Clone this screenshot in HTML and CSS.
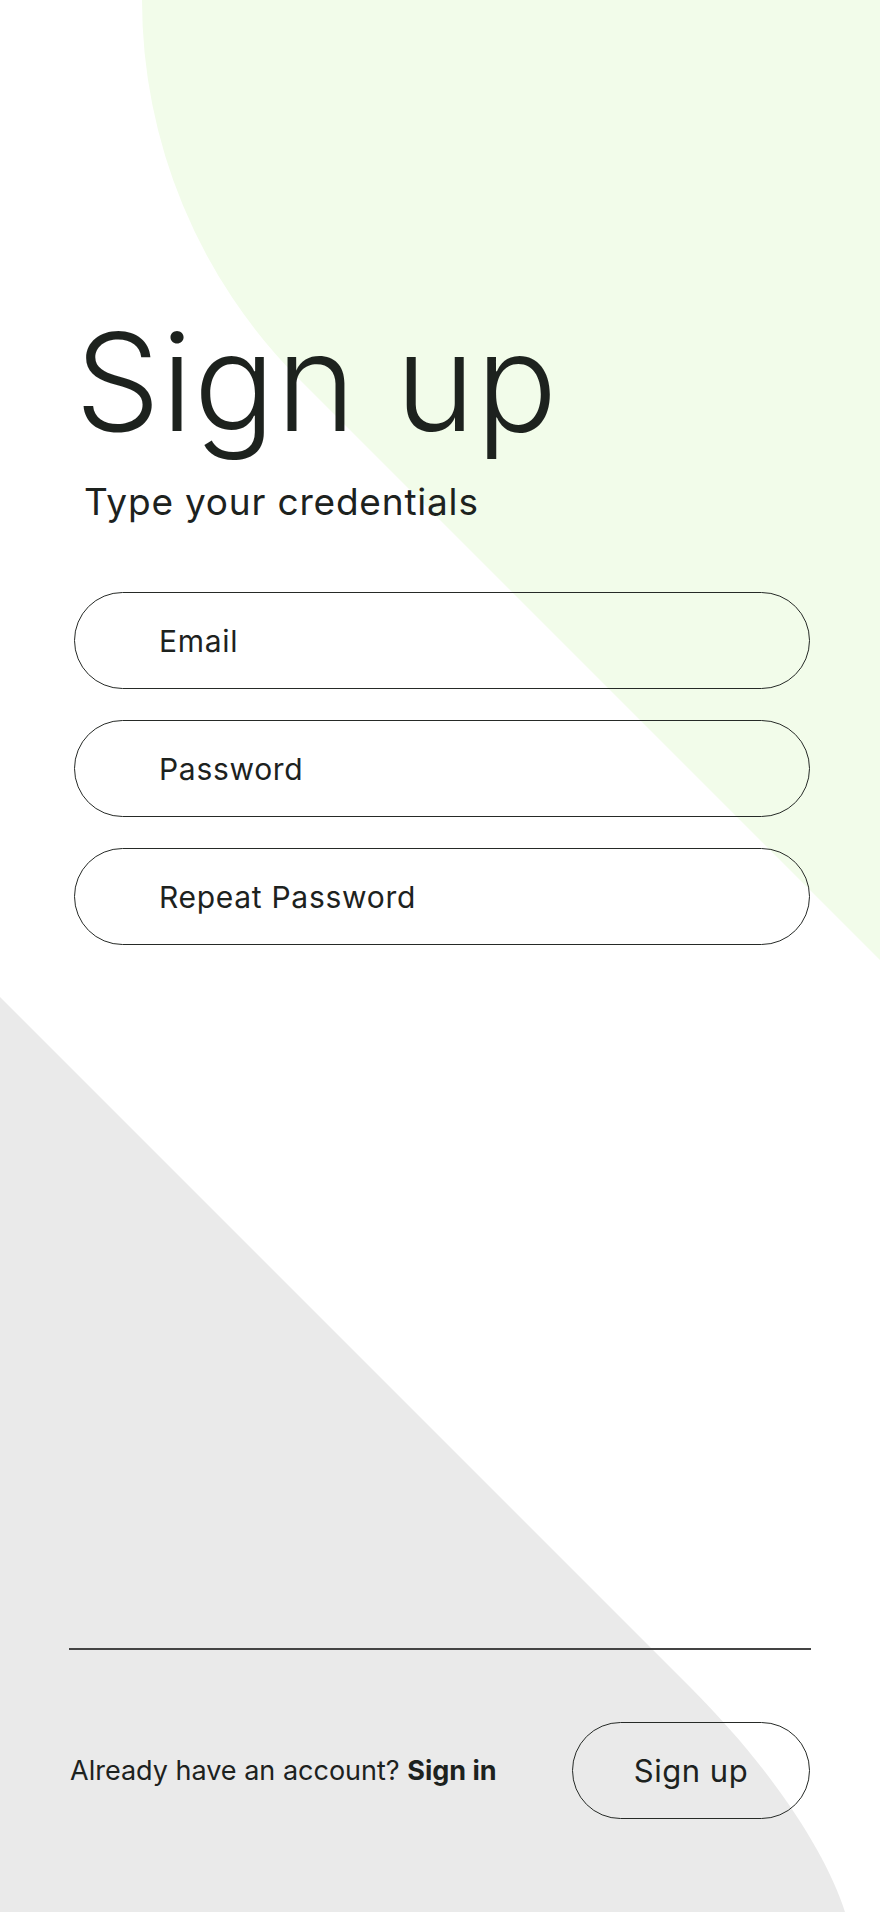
FILE: index.html
```html
<!DOCTYPE html>
<html lang="en">
<head>
<meta charset="utf-8">
<title>Sign up</title>
<link rel="stylesheet" href="styles.css">
</head>
<body>
<div class="page">
  <svg class="bg" width="880" height="1912" viewBox="0 0 880 1912" aria-hidden="true">
    <path class="bg-green" d="M142 0 A536 536 0 0 0 299 379 L880 960 L880 0 Z"/>
    <path class="bg-gray" d="M0 997 L690 1687 C770 1767 825 1850 845 1912 L0 1912 Z"/>
  </svg>
  <main class="content">
    <header class="head">
      <h1 class="title">Sign up</h1>
      <p class="subtitle">Type your credentials</p>
    </header>
    <form class="form">
      <input class="field" type="email" placeholder="Email">
      <input class="field" type="password" placeholder="Password">
      <input class="field" type="password" placeholder="Repeat Password">
    </form>
    <div class="spacer"></div>
    <hr class="divider">
    <footer class="foot">
      <p class="foot-text">Already have an account? <b>Sign in</b></p>
      <button class="btn" type="button">Sign up</button>
    </footer>
  </main>
</div>
</body>
</html>
```

FILE: styles.css
```css
html, body {
  margin: 0;
  padding: 0;
  background: #ffffff;
}

.page {
  position: relative;
  width: 880px;
  height: 1912px;
  overflow: hidden;
  font-family: "Inter", "Lato", "Liberation Sans", sans-serif;
  color: #1d221e;
}

.bg {
  position: absolute;
  left: 0;
  top: 0;
  display: block;
}

.bg-green { fill: #f2fcea; }
.bg-gray { fill: #eaeaea; }

.content {
  position: relative;
  box-sizing: border-box;
  height: 1912px;
  display: flex;
  flex-direction: column;
  padding: 315px 70px 93px 69px;
}

.head {
  display: flex;
  flex-direction: column;
}

.title {
  margin: 0 0 0 6px;
  font-size: 135px;
  line-height: 135px;
  font-weight: 300;
  letter-spacing: 1px;
}

.subtitle {
  margin: 29px 0 0 15px;
  font-size: 37px;
  line-height: 45px;
  font-weight: 400;
  letter-spacing: 0.8px;
}

.form {
  display: flex;
  flex-direction: column;
  gap: 31px;
  margin: 68px 0 0 5px;
}

.field {
  box-sizing: border-box;
  height: 97px;
  width: 736px;
  border: 1px solid #262a27;
  border-radius: 49px;
  background: transparent;
  padding: 0 0 0 84px;
  font-family: "Inter", "Lato", "Liberation Sans", sans-serif;
  font-size: 30px;
  letter-spacing: 0.7px;
  color: #1d221e;
  outline: none;
}

.field::placeholder {
  color: #1d221e;
  opacity: 1;
}

.spacer { flex: 1; }

.divider {
  margin: 0;
  border: 0;
  height: 2px;
  background: #444444;
  width: 742px;
}

.foot {
  display: flex;
  justify-content: space-between;
  align-items: center;
  margin-top: 72px;
}

.foot-text {
  margin: 0 0 0 1px;
  font-size: 27px;
  line-height: 34px;
  color: #1d221e;
}

.foot-text b {
  font-weight: 700;
}

.btn {
  box-sizing: border-box;
  width: 238px;
  height: 97px;
  border: 1px solid #262a27;
  border-radius: 49px;
  background: transparent;
  font-family: "Inter", "Lato", "Liberation Sans", sans-serif;
  font-size: 31px;
  letter-spacing: 0.5px;
  color: #1d221e;
  padding: 0;
  margin-right: 0;
}
```
